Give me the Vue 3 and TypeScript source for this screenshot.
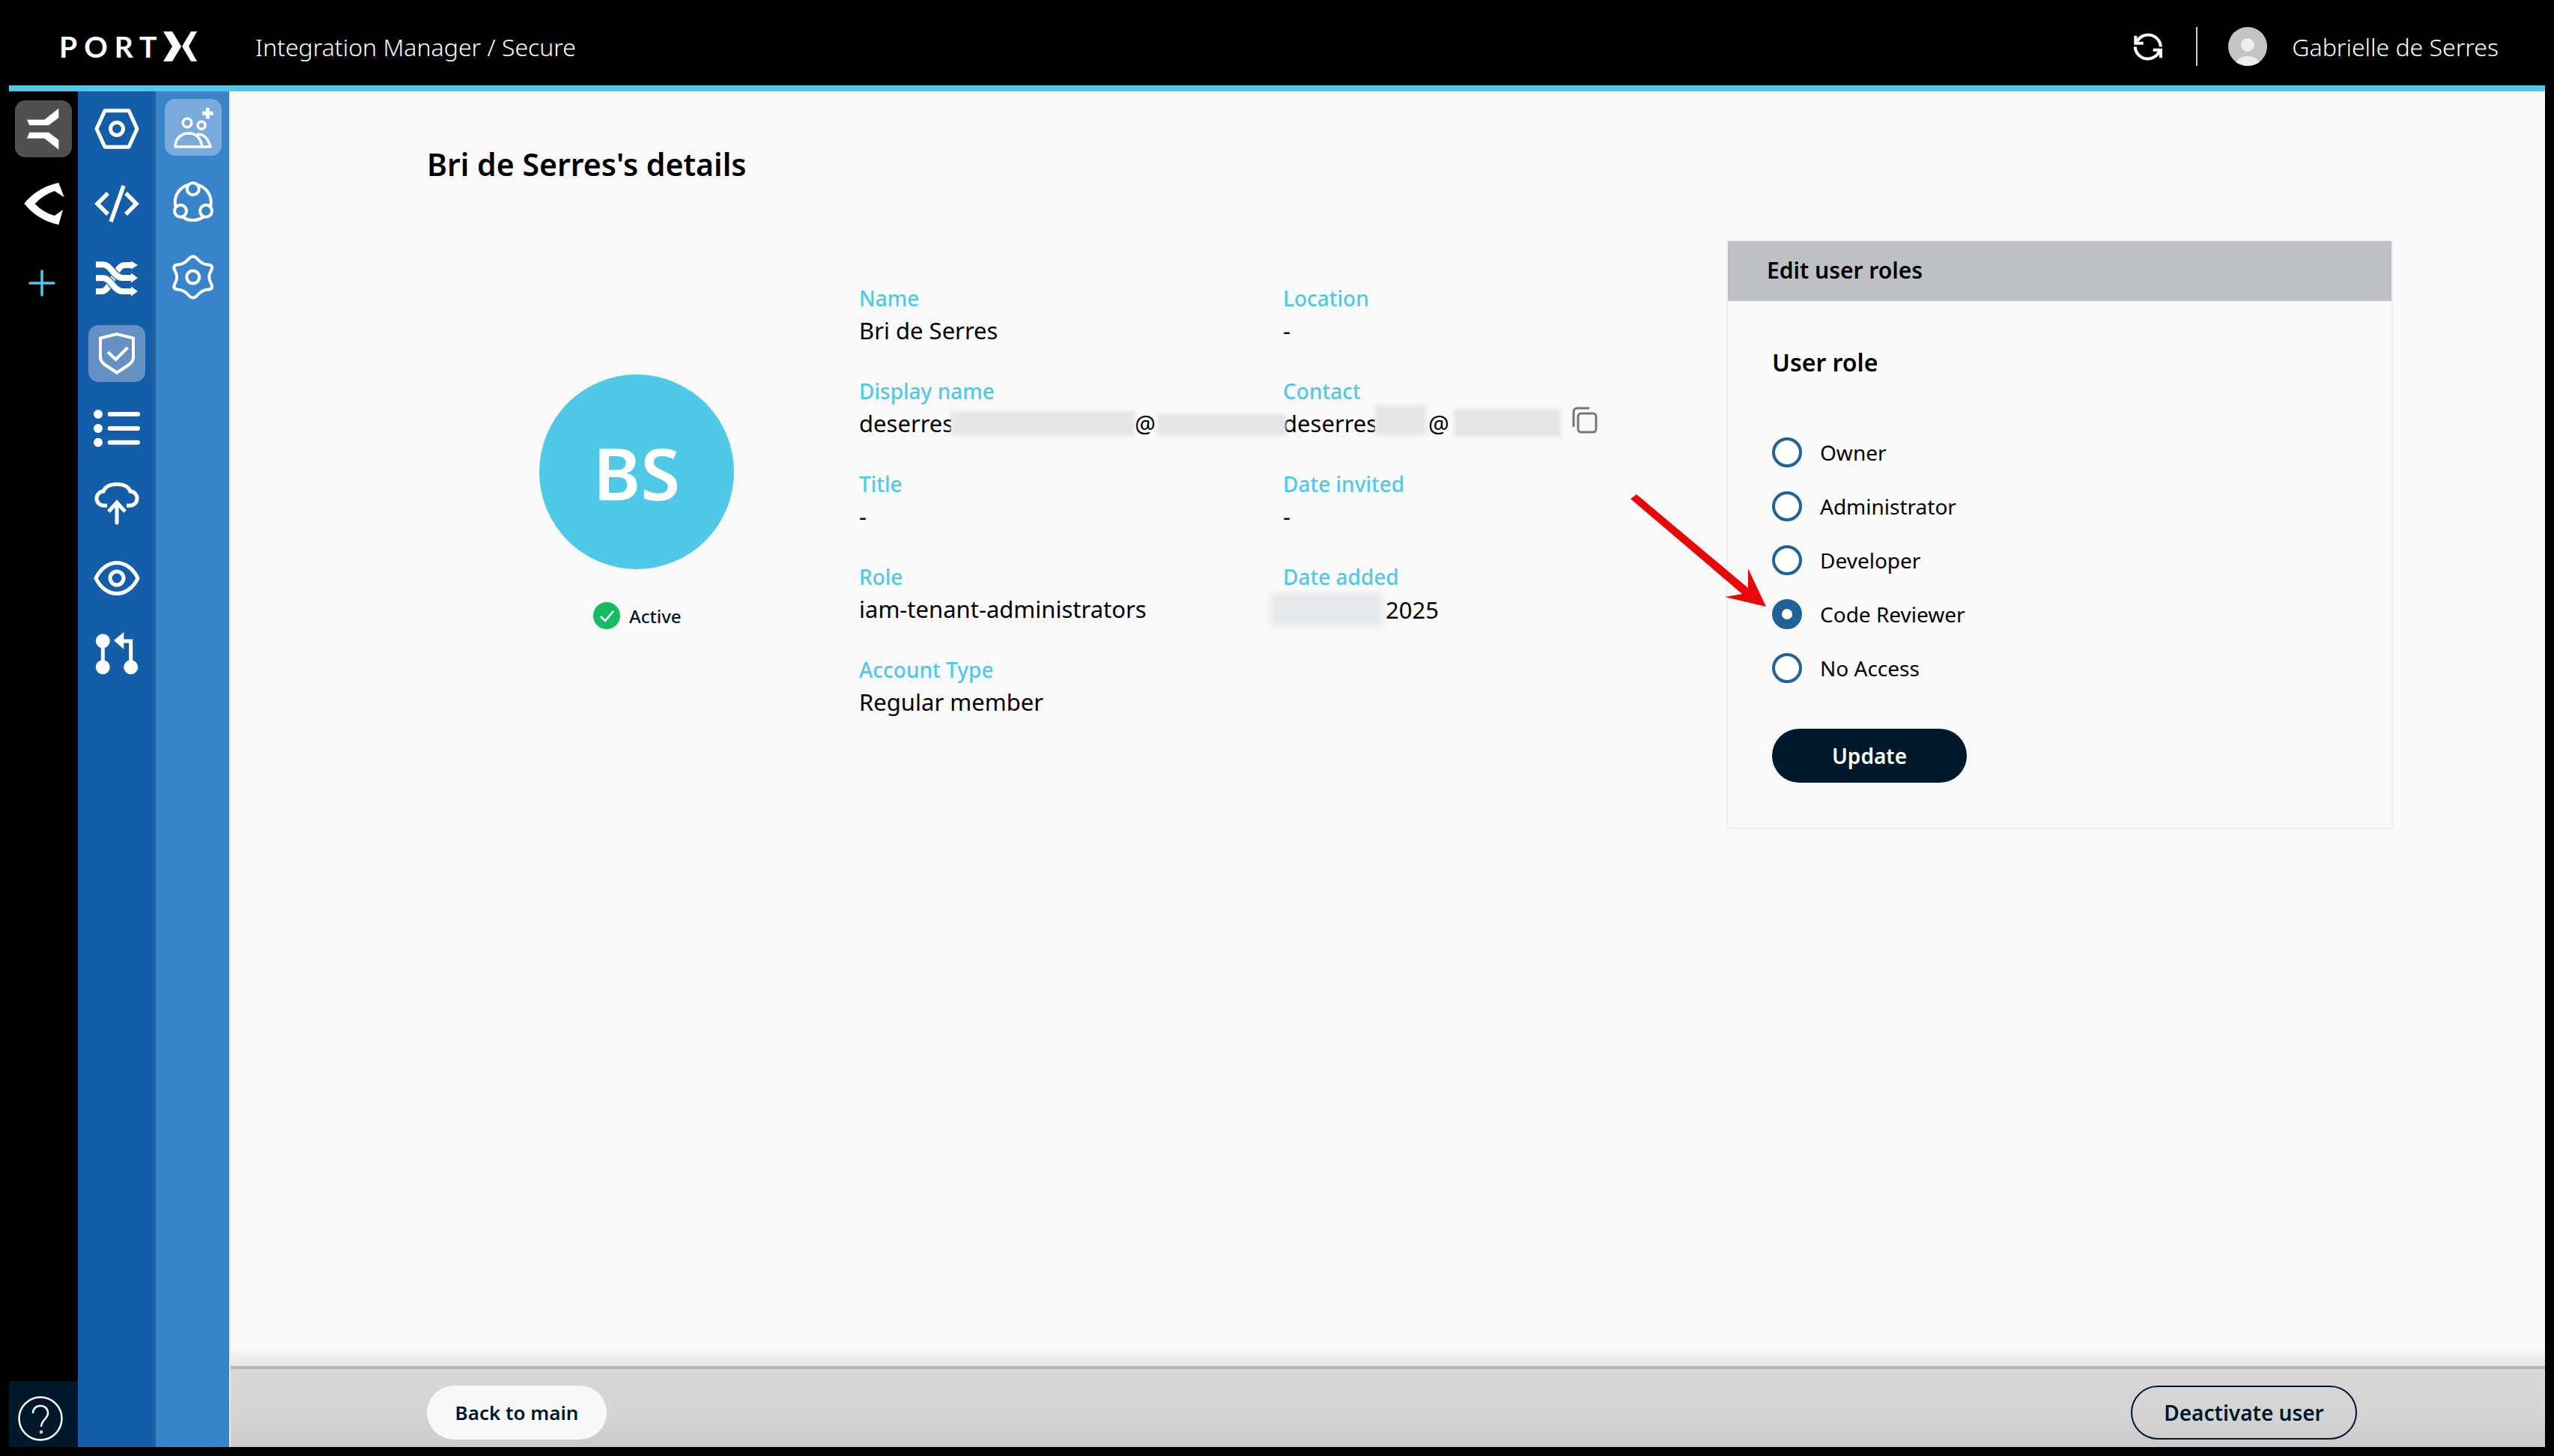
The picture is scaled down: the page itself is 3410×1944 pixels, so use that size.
<script setup lang="ts">
interface Field {
  label: string;
  value?: string;
}

const leftFields: Field[] = [
  { label: 'Name', value: 'Bri de Serres' },
  { label: 'Display name' },
  { label: 'Title', value: '-' },
  { label: 'Role', value: 'iam-tenant-administrators' },
  { label: 'Account Type', value: 'Regular member' },
];

const rightFields: Field[] = [
  { label: 'Location', value: '-' },
  { label: 'Contact' },
  { label: 'Date invited', value: '-' },
  { label: 'Date added' },
];

const roles = ['Owner', 'Administrator', 'Developer', 'Code Reviewer', 'No Access'];
const selectedRole = 'Code Reviewer';
</script>

<template>
  <div class="shell">
    <header class="topbar">
      <div class="logo">
        <span class="logo-text">PORT</span>
        <svg class="logo-x" viewBox="0 0 46 40" fill="#fff">
          <path d="M0 0h12l12 20-12 20H0l12-20z" />
          <path d="M45 0h-8L25 20l12 20h8L34 20z" />
        </svg>
      </div>
      <div class="crumb">Integration Manager / Secure</div>
      <div class="top-right">
        <svg class="refresh" viewBox="0 0 40 40" fill="none" stroke="#fff" stroke-width="4">
          <path d="M5.3 13A17 17 0 0 1 37 20.3" />
          <path d="M2.7 20.3A17 17 0 0 0 35.3 26.3" />
          <path d="M3.3 5.7v10h10.4" />
          <path d="M26.7 24.7H37v10.6" />
        </svg>
        <span class="top-divider"></span>
        <span class="user-pic"><span class="user-head"></span><span class="user-body"></span></span>
        <span class="user-name">Gabrielle de Serres</span>
      </div>
    </header>

    <div class="frame">
      <div class="accent"></div>
      <div class="columns">
        <nav class="rail rail-apps">
          <div class="tile tile-dark">
            <svg viewBox="0 0 76 76" fill="#fff">
              <path d="M58.3 10.7v12.6L45 33.3H19.3L16 25.7h23.3z" />
              <path d="M58.3 65.7V52.7L45 42.7H19.3L16 50.7h23.3z" />
            </svg>
          </div>
          <div class="tile">
            <svg viewBox="0 0 76 76" fill="#fff">
              <path d="M58.3 10l7.4 19.3L52.7 21Q36 27 26.7 38.3 38 50 52.7 54L64 46l-5.7 20Q30 60 12.3 37.7 30 16 58.3 10z" />
            </svg>
          </div>
          <div class="tile tile-plus">
            <svg viewBox="0 0 76 76" fill="none" stroke="#50c8e8" stroke-width="3.5" stroke-linecap="round">
              <path d="M36 22v32M20 38h32" />
            </svg>
          </div>
          <div class="help">
            <svg viewBox="0 0 60 60" fill="none" stroke="#fff" stroke-width="2.5">
              <circle cx="30" cy="30" r="28.5" />
              <path d="M20 23c0-6 4-10 10-10s10 4 10 10c0 7-9 9-9 18" />
              <circle cx="31" cy="48" r="1.5" stroke-width="1.5" />
            </svg>
          </div>
        </nav>

        <nav class="rail rail-main">
          <div class="tile">
            <svg viewBox="0 0 76 76" fill="none" stroke="#fff" stroke-width="5" stroke-linejoin="round">
              <path d="M22 13.8h32L65 38 54 62.2H22L11 38z" />
              <circle cx="38" cy="38" r="8.5" />
            </svg>
          </div>
          <div class="tile">
            <svg viewBox="0 0 76 76" fill="none" stroke="#fff" stroke-width="5.5">
              <path d="M26 24L12 38l14 14M50 24l14 14-14 14M47 14L30 62" />
            </svg>
          </div>
          <div class="tile">
            <svg viewBox="0 0 76 76" fill="none">
              <path d="M10 55h8C30 55 36 20 48 20h10" stroke="#fff" stroke-width="8" />
              <path d="M10 19.3h10c10 0 14 17.7 26 17.7h12" stroke="#145da8" stroke-width="10.5" />
              <path d="M10 19.3h10c10 0 14 17.7 26 17.7h12" stroke="#fff" stroke-width="8" />
              <path d="M10 37.3h10c10 0 14 17.7 26 17.7h12" stroke="#145da8" stroke-width="10.5" />
              <path d="M10 37.3h10c10 0 14 17.7 26 17.7h12" stroke="#fff" stroke-width="8" />
              <path d="M57 14.5L66 20l-9 5.5zM57 30.5L66 37l-9 6.5zM57 48.5L66 55l-9 6.5z" fill="#fff" />
            </svg>
          </div>
          <div class="tile tile-active">
            <svg viewBox="0 0 76 76" fill="none" stroke="#fff" stroke-width="4">
              <path d="M16 17.5L38 12l22 5.5V43c0 4-2 7-6 10L38 63.5 22 53c-4-3-6-6-6-10z" />
              <path d="M26 36l10.5 10L52.5 30" />
            </svg>
          </div>
          <div class="tile">
            <svg viewBox="0 0 76 76" fill="#fff">
              <circle cx="13" cy="19" r="6" />
              <circle cx="13" cy="38" r="6" />
              <circle cx="13" cy="56.7" r="6" />
              <rect x="25.7" y="16" width="43.3" height="6" rx="3" />
              <rect x="25.7" y="35" width="43.3" height="6" rx="3" />
              <rect x="25.7" y="53.7" width="43.3" height="6" rx="3" />
            </svg>
          </div>
          <div class="tile">
            <svg viewBox="0 0 76 76" fill="none" stroke="#fff" stroke-width="5">
              <path d="M25 41h-4a9.5 9.5 0 0 1-1-19C22 16 29 12.5 38 12.5S54 16 56 22a9.5 9.5 0 0 1-1 19h-4" />
              <path d="M38 64V37" stroke-linecap="round" />
              <path d="M27 49l11-12 11 12" />
            </svg>
          </div>
          <div class="tile">
            <svg viewBox="0 0 76 76" fill="none" stroke="#fff" stroke-width="5">
              <path d="M10 38C16 25 27 17.5 38 17.5S60 25 66 38C60 51 49 58.5 38 58.5S16 51 10 38z" />
              <circle cx="38" cy="38" r="9" />
            </svg>
          </div>
          <div class="tile">
            <svg viewBox="0 0 76 76" fill="none" stroke="#fff" stroke-width="5">
              <circle cx="19.3" cy="21.7" r="9.5" fill="#fff" stroke="none" />
              <circle cx="19.3" cy="56.7" r="9.5" fill="#fff" stroke="none" />
              <circle cx="56.7" cy="56.7" r="9.5" fill="#fff" stroke="none" />
              <path d="M19.3 21.7v35M56.7 56.7V22H44" />
              <path d="M47.3 10v22.7L34 21z" fill="#fff" stroke="none" />
            </svg>
          </div>
        </nav>

        <nav class="rail rail-sub">
          <div class="tile tile-sub-active">
            <svg viewBox="0 0 76 76" fill="none" stroke="#fff" stroke-width="3.5">
              <circle cx="30" cy="32" r="5.8" />
              <circle cx="49" cy="35.3" r="5" />
              <path d="M14 64C14 53 22 46 32 46s16 7 18 18z" stroke-linejoin="round" />
              <path d="M43 47.5C52 46 58 54 61 64H50" stroke-linejoin="round" />
              <path d="M57.3 12v14.6M50 19.3h14.6" stroke-width="5" />
            </svg>
          </div>
          <div class="tile">
            <svg viewBox="0 0 76 76" fill="#3884cb" stroke="#fff" stroke-width="4">
              <circle cx="37.7" cy="38" r="24" fill="none" />
              <circle cx="37.7" cy="20.3" r="8" />
              <circle cx="21" cy="49.7" r="8" />
              <circle cx="55" cy="49.7" r="8" />
            </svg>
          </div>
          <div class="tile">
            <svg viewBox="0 0 76 76" fill="none" stroke="#fff" stroke-width="4">
              <path d="M31.55 14Q37.7 7 43.85 14Q50 21 58 21.5Q66 22 61.5 30Q57 38 61.5 46Q66 54 58 54.5Q50 55 43.85 62Q37.7 69 31.55 62Q25.4 55 17.4 54.5Q9.4 54 13.9 46Q18.4 38 13.9 30Q9.4 22 17.4 21.5Q25.4 21 31.55 14z" />
              <circle cx="37.7" cy="38" r="8.5" />
            </svg>
          </div>
        </nav>

        <main class="main">
          <div class="content">
            <h1 class="page-title">Bri de Serres's details</h1>
            <div class="details">
              <div class="profile">
                <div class="avatar">BS</div>
                <div class="status">
                  <svg viewBox="0 0 36 36">
                    <circle cx="18" cy="18" r="18" fill="#16bc64" />
                    <path d="M10 19l6 6 11-13" fill="none" stroke="#fff" stroke-width="2.5" />
                  </svg>
                  <span>Active</span>
                </div>
              </div>

              <div class="fields">
                <div v-for="f in leftFields" :key="f.label" class="field">
                  <div class="field-label">{{ f.label }}</div>
                  <div v-if="f.value" class="field-value">{{ f.value }}</div>
                  <div v-else class="field-value masked">
                    <span class="clip-name">deserres</span>
                    <i class="smudge smudge-name"></i>
                    <span class="clip-at">@</span>
                    <i class="smudge smudge-low smudge-domain"></i>
                  </div>
                </div>
              </div>

              <div class="fields">
                <div v-for="f in rightFields" :key="f.label" class="field">
                  <div class="field-label">{{ f.label }}</div>
                  <div v-if="f.value" class="field-value">{{ f.value }}</div>
                  <div v-else-if="f.label === 'Contact'" class="field-value masked">
                    <span class="clip-name">deserres</span>
                    <i class="smudge smudge-high"></i>
                    <span class="clip-at">@</span>
                    <i class="smudge smudge-contact"></i>
                    <svg class="copy" viewBox="0 0 36 36" fill="none" stroke="#777" stroke-width="3">
                      <rect x="9" y="9" width="24" height="25" rx="4" />
                      <path d="M3 27V7c0-3 2-5 5-5h16" />
                    </svg>
                  </div>
                  <div v-else class="field-value masked">
                    <i class="smudge smudge-date"></i>
                    <span>2025</span>
                  </div>
                </div>
              </div>

              <section class="panel">
                <h2 class="panel-head">Edit user roles</h2>
                <div class="panel-body">
                  <h3 class="role-title">User role</h3>
                  <ul class="roles">
                    <li v-for="r in roles" :key="r" class="role">
                      <span class="radio" :class="{ on: r === selectedRole }"></span>
                      <span>{{ r }}</span>
                    </li>
                  </ul>
                  <button type="button" class="btn-update">Update</button>
                </div>
              </section>
            </div>
          </div>

          <footer class="actions">
            <button type="button" class="btn-back">Back to main</button>
            <button type="button" class="btn-deactivate">Deactivate user</button>
          </footer>

          <svg class="arrow" viewBox="0 0 200 170">
            <path d="M7 16l8-6 149 125v-26l24 51-55-13 23-4z" fill="#e80808" />
          </svg>
        </main>
      </div>
    </div>
  </div>
</template>

<style>
html,
body {
  margin: 0;
  background: #000;
}
</style>

<style scoped>
.shell {
  width: 3410px;
  height: 1944px;
  background: #000;
  display: flex;
  flex-direction: column;
  font-family: "Noto Sans", Roboto, sans-serif;
  color: #000;
  overflow: hidden;
}

.topbar {
  box-sizing: border-box;
  height: 114px;
  flex: none;
  display: flex;
  align-items: center;
  color: #fff;
  padding: 10px 74px 0 79px;
}

.logo {
  display: flex;
  align-items: center;
  width: 262px;
}

.logo-text {
  width: 139px;
  font-family: Lato, sans-serif;
  font-size: 39px;
  font-weight: 700;
  letter-spacing: 9px;
  line-height: 40px;
}

.logo-x {
  width: 46px;
  height: 40px;
}

.crumb {
  font-size: 32px;
  font-weight: 300;
}

.top-right {
  margin-left: auto;
  display: flex;
  align-items: center;
}

.refresh {
  width: 40px;
  height: 40px;
}

.top-divider {
  width: 2px;
  height: 52px;
  background: #ccc;
  margin: 0 41px 0 44px;
}

.user-pic {
  width: 52px;
  height: 52px;
  border-radius: 50%;
  background: #c4c4c4;
  position: relative;
  overflow: hidden;
  margin-right: 33px;
}

.user-head {
  position: absolute;
  left: 17px;
  top: 15px;
  width: 18px;
  height: 18px;
  border-radius: 50%;
  background: #eee;
}

.user-body {
  position: absolute;
  left: 10px;
  top: 39px;
  width: 32px;
  height: 22px;
  border-radius: 50%;
  background: #eee;
}

.user-name {
  font-size: 32px;
  font-weight: 300;
}

.frame {
  flex: 1;
  min-height: 0;
  margin: 0 12px 12px;
  display: flex;
  flex-direction: column;
}

.accent {
  height: 8px;
  flex: none;
  background: #50c8e8;
}

.columns {
  flex: 1;
  min-height: 0;
  display: flex;
}

.rail {
  display: flex;
  flex-direction: column;
  align-items: center;
  gap: 24px;
  flex: none;
  box-sizing: border-box;
}

.rail-apps {
  width: 92px;
  padding-top: 12px;
  background: #000;
}

.rail-main {
  width: 104px;
  padding-top: 12px;
  background: #145da8;
  box-shadow: inset -4px 0 0 #256199;
}

.rail-sub {
  width: 98px;
  padding-top: 10px;
  padding-left: 2px;
  background: #3884cb;
}

.tile {
  width: 76px;
  height: 76px;
  border-radius: 14px;
  flex: none;
}

.tile svg {
  width: 76px;
  height: 76px;
  display: block;
}

.tile-dark {
  background: #505050;
}

.tile-plus {
  margin-top: 6px;
}

.tile-active {
  background: #6590c4;
}

.tile-sub-active {
  background: #7aa9dc;
}

.help {
  margin-top: auto;
  align-self: stretch;
  box-sizing: border-box;
  height: 88px;
  padding-left: 12px;
  background: #00182b;
  display: flex;
  align-items: center;
}

.help svg {
  width: 60px;
  height: 60px;
  margin-top: 12px;
}

.main {
  flex: 1;
  min-width: 0;
  position: relative;
  display: flex;
  flex-direction: column;
  background: #f9f9f9;
  border-left: 2px solid #eef2f6;
}

.content {
  flex: 1;
  min-height: 0;
  box-sizing: border-box;
  padding-top: 72px;
  padding-left: 262px;
  background: linear-gradient(to top, #e4e4e4, #f9f9f9 24px);
}

.page-title {
  margin: 0;
  font-size: 41px;
  line-height: 50px;
  font-weight: 600;
}

.details {
  margin-top: 76px;
  display: grid;
  grid-template-columns: 577px 566px 592px 890px;
}

.profile {
  padding-top: 180px;
  padding-left: 150px;
}

.avatar {
  width: 260px;
  height: 260px;
  border-radius: 50%;
  background: #50c8e8;
  color: #fff;
  font-size: 96px;
  font-weight: 600;
  display: flex;
  align-items: center;
  justify-content: center;
}

.status {
  margin-top: 44px;
  margin-left: 72px;
  display: flex;
  align-items: center;
  gap: 12px;
  color: #00182b;
  font-size: 24px;
  font-weight: 500;
}

.status svg {
  width: 36px;
  height: 36px;
}

.fields {
  padding-top: 60px;
  display: flex;
  flex-direction: column;
  gap: 42px;
}

.field {
  height: 82px;
}

.field-label {
  color: #50c8e8;
  font-size: 28px;
  font-weight: 500;
  line-height: 36px;
}

.field-value {
  margin-top: 4px;
  font-size: 31px;
  line-height: 42px;
}

.masked {
  display: flex;
  align-items: center;
  white-space: nowrap;
}

.clip-name {
  flex: none;
  width: 123px;
  overflow: hidden;
}

.clip-at {
  flex: none;
  width: 30px;
  overflow: hidden;
}

.smudge {
  display: block;
  flex: none;
  height: 32px;
  background: #e6e6e6;
  filter: blur(2px);
}

.smudge-name {
  width: 245px;
}

.smudge-domain {
  width: 172px;
}

.smudge-contact {
  width: 143px;
  margin-left: 4px;
  height: 36px;
}

.smudge-low {
  height: 28px;
  margin-top: 4px;
}

.smudge-high {
  width: 68px;
  height: 40px;
  margin-top: -8px;
  margin-right: 3px;
}

.smudge-date {
  width: 149px;
  height: 44px;
  margin-left: -16px;
  margin-right: 4px;
  background: #e6e8ea;
  filter: blur(4px);
}

.copy {
  flex: none;
  width: 36px;
  height: 36px;
  margin-left: 14px;
  margin-top: -8px;
}

.panel {
  box-sizing: border-box;
  width: 890px;
  height: 787px;
  border: 2px solid #eee;
}

.panel-head {
  margin: 0;
  height: 80px;
  padding-left: 52px;
  background: #bfc0c3;
  font-size: 30px;
  line-height: 78px;
  font-weight: 600;
}

.panel-body {
  padding: 60px 59px 0;
}

.role-title {
  margin: 0;
  font-size: 32px;
  line-height: 44px;
  font-weight: 600;
}

.roles {
  list-style: none;
  margin: 78px 0 0;
  padding: 0;
  display: flex;
  flex-direction: column;
  gap: 32px;
}

.role {
  display: flex;
  align-items: center;
  gap: 24px;
  height: 40px;
  font-size: 28px;
}

.radio {
  box-sizing: border-box;
  width: 40px;
  height: 40px;
  border-radius: 50%;
  border: 4px solid #1f6298;
  background: #fff;
}

.radio.on {
  border-width: 13px;
}

.btn-update {
  display: block;
  margin-top: 61px;
  width: 260px;
  height: 72px;
  border: 0;
  border-radius: 36px;
  background: #00182b;
  color: #fff;
  font: inherit;
  font-size: 28px;
  font-weight: 600;
}

.actions {
  flex: none;
  box-sizing: border-box;
  height: 108px;
  border-top: 4px solid #b5b5b5;
  background: linear-gradient(#d8d8d8, #d4d4d4 60%, #cbcbcb);
  display: flex;
  align-items: flex-start;
  justify-content: space-between;
  padding: 22px 251px 0 262px;
}

.btn-back,
.btn-deactivate {
  height: 72px;
  border-radius: 36px;
  font: inherit;
  color: #00182b;
  font-weight: 600;
}

.btn-back {
  width: 240px;
  border: 0;
  background: #f8f8f8;
  font-size: 26px;
}

.btn-deactivate {
  width: 302px;
  border: 2px solid #00182b;
  background: transparent;
  font-size: 28px;
}

.arrow {
  position: absolute;
  left: 1862px;
  top: 528px;
  width: 200px;
  height: 170px;
}
</style>
